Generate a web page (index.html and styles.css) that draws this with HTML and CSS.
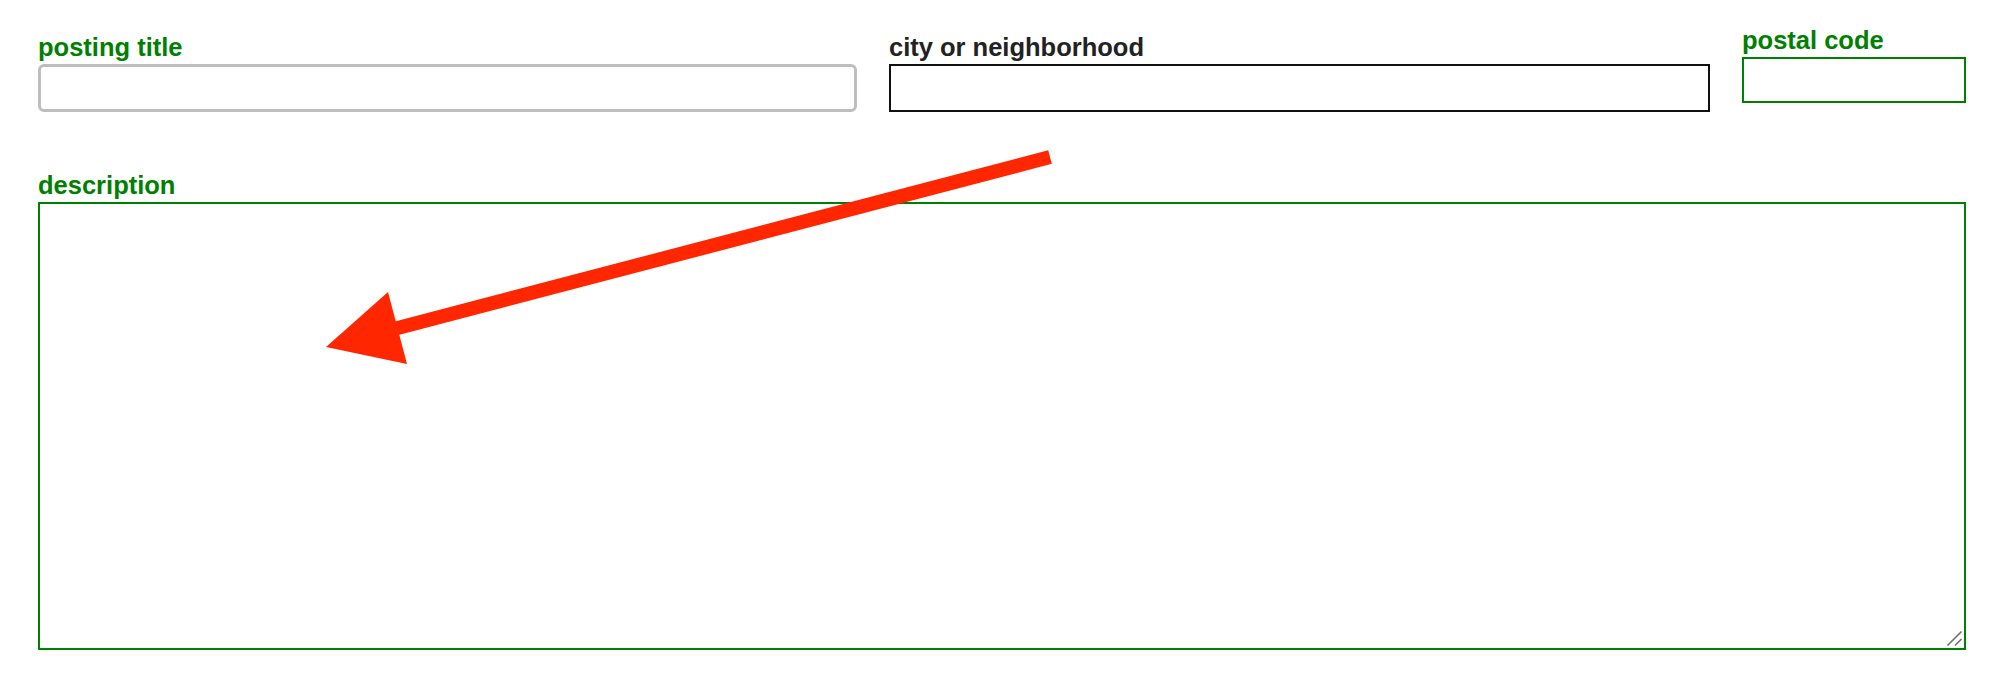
FILE: index.html
```html
<!DOCTYPE html>
<html lang="en">
<head>
<meta charset="utf-8">
<title>posting form</title>
<link rel="stylesheet" href="styles.css">
</head>
<body>
<main class="form">
  <div class="row-top">
    <div class="field">
      <label class="label label--green" for="title">posting title</label>
      <input class="input input--title" id="title" type="text">
    </div>
    <div class="field">
      <label class="label label--dark" for="city">city or neighborhood</label>
      <input class="input input--city" id="city" type="text">
    </div>
    <div class="field field--postal">
      <label class="label label--green" for="postal">postal code</label>
      <input class="input input--postal" id="postal" type="text">
    </div>
  </div>
  <div class="field field--desc">
    <label class="label label--green" for="desc">description</label>
    <div class="textarea-wrap">
      <textarea class="textarea" id="desc"></textarea>
      <svg class="resize-handle" width="20" height="20" viewBox="0 0 20 20" aria-hidden="true">
        <line x1="3.5" y1="17.5" x2="17.5" y2="3.5" stroke="#6e6e6e" stroke-width="1.6"/>
        <line x1="11" y1="17.5" x2="17.5" y2="11" stroke="#6e6e6e" stroke-width="1.6"/>
      </svg>
    </div>
  </div>
</main>
<svg class="annotation" width="2000" height="686" viewBox="0 0 2000 686" aria-hidden="true">
  <line x1="1050" y1="157" x2="392" y2="329.5" stroke="#ff2600" stroke-width="14"/>
  <polygon points="388,292 326,347 407,364" fill="#ff2600"/>
</svg>
</body>
</html>
```

FILE: styles.css
```css
html, body {
  margin: 0;
  padding: 0;
  background: #ffffff;
}

body {
  width: 2000px;
  height: 686px;
  overflow: hidden;
  position: relative;
  font-family: "Liberation Sans", Arial, Helvetica, sans-serif;
}

.form {
  padding: 32px 0 0 38px;
}

.row-top {
  display: grid;
  grid-template-columns: 819px 821px 224px;
  column-gap: 32px;
  align-items: start;
}

.field {
  display: flex;
  flex-direction: column;
}

.field--postal {
  margin-top: -7px;
}

.field--desc {
  margin-top: 58px;
  width: 1928px;
}

.label {
  font-size: 25.5px;
  line-height: 30px;
  font-weight: bold;
  margin-bottom: 2px;
}

.label--green {
  color: #008000;
}

.label--dark {
  color: #222222;
}

.input {
  box-sizing: border-box;
  margin: 0;
  padding: 0 6px;
  font: inherit;
  background: #ffffff;
  outline: none;
}

.input--title {
  width: 819px;
  height: 48px;
  border: 3px solid #bebec1;
  border-radius: 6px;
}

.input--city {
  width: 821px;
  height: 48px;
  border: 2px solid #111111;
  border-radius: 0;
}

.input--postal {
  width: 224px;
  height: 46px;
  border: 2px solid #008000;
  border-radius: 0;
}

.textarea-wrap {
  position: relative;
  width: 1928px;
  height: 448px;
}

.textarea {
  box-sizing: border-box;
  display: block;
  width: 1928px;
  height: 448px;
  margin: 0;
  border: 2px solid #008000;
  border-radius: 0;
  background: #ffffff;
  outline: none;
  font: inherit;
  resize: none;
}

.resize-handle {
  position: absolute;
  right: 2px;
  bottom: 2px;
  pointer-events: none;
}

.annotation {
  position: absolute;
  left: 0;
  top: 0;
  pointer-events: none;
}
```
